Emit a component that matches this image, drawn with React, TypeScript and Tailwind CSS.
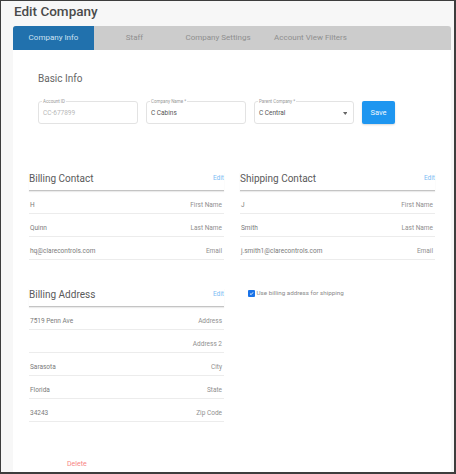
import React from "react";

const tabs = [
    { label: "Company Info", w: "w-[81px]", active: true },
    { label: "Staff", w: "w-[81px]" },
    { label: "Company Settings", w: "w-[86px]" },
    { label: "Account View Filters", w: "w-[99px]" },
];

export default function App() {
    return (
        <div className="w-[456px] h-[474px] flex flex-col bg-[#f7f7f7] border-t border-l border-r-2 border-b-2 border-[#3d3d3d] pl-[12px] pr-[3px] font-['Roboto',sans-serif] overflow-hidden">
            <h1 className="ml-[1px] text-[13.5px] leading-[20px] font-medium text-[#4a4a4a]">Edit Company</h1>

            {/* Tabs */}
            <div className="mt-[5px] h-[24px] flex bg-[#cccccc] rounded-t-[3px] overflow-hidden">
                {tabs.map((t) => (
                    <div
                        key={t.label}
                        className={`${t.w} flex items-center justify-center text-[8px] ${t.active ? "bg-[#2171ad] text-[#cfe2f2]" : "text-[#8f8f8f]"}`}
                    >
                        {t.label}
                    </div>
                ))}
            </div>

            {/* Card */}
            <div className="flex-1 bg-white px-4 pt-[22px]">
                <div className="ml-[9px]">
                    <h2 className="text-[10px] leading-[14px] text-[#666]">Basic Info</h2>
                    <div className="mt-[15px] flex gap-[8px]">
                        <Field label="Account ID" value="CC-677899" muted />
                        <Field label="Company Name *" value="C Cabins" />
                        <Field label="Parent Company *" value="C Central" select />
                        <button className="w-[33px] h-[23px] rounded-[2px] bg-[#1e96f0] text-[#eef7fe] text-[7.5px] shadow-[0_1px_2px_rgba(0,0,0,0.15)]">
                            Save
                        </button>
                    </div>
                </div>

                <div className="mt-[48px] grid grid-cols-2 gap-x-4 gap-y-[28px]">
                    <Section title="Billing Contact" rows={[["H", "First Name"], ["Quinn", "Last Name"], ["hq@clarecontrols.com", "Email"]]} />
                    <Section title="Shipping Contact" rows={[["J", "First Name"], ["Smith", "Last Name"], ["j.smith1@clarecontrols.com", "Email"]]} />
                    <Section
                        title="Billing Address"
                        rows={[["7519 Penn Ave", "Address"], ["", "Address 2"], ["Sarasota", "City"], ["Florida", "State"], ["34243", "Zip Code"]]}
                    />
                    <div>
                        <label className="mt-[2px] ml-[8px] h-[7px] flex items-center gap-[2px] text-[6.25px] text-[#8a8a8a]">
                            <span className="w-[6.5px] h-[6.5px] rounded-[1px] bg-[#1a73e8] flex items-center justify-center">
                                <svg viewBox="0 0 10 10" className="w-[5px] h-[5px]">
                                    <path d="M2 5.2 L4.2 7.3 L8 2.8" stroke="white" strokeWidth="1.8" fill="none" />
                                </svg>
                            </span>
                            Use billing address for shipping
                        </label>
                    </div>
                </div>

                <div className="mt-[38px] ml-[38px] text-[7px] leading-[9px] text-[#f78585]">Delete</div>
            </div>
        </div>
    );
}

function Field({ label, value, muted, select }: { label: string, value: string, muted?: boolean, select?: boolean }) {
    return (
        <div className="relative w-[100px] h-[23px] rounded-[3px] border border-[#e3e3e3] flex items-center pl-[4px] pr-[6px] pt-[3px]">
            <span className="absolute left-[3px] -top-[3px] px-[1px] bg-white text-[4.5px] leading-[5px] text-[#999]">{label}</span>
            <span className={`flex-1 text-[6.5px] ${muted ? "text-[#b8b8b8]" : "text-[#555]"}`}>{value}</span>
            {select && (
                <svg viewBox="0 0 6 4" className="w-[4.5px] h-[3px] mb-[2px]">
                    <path d="M0 0 L6 0 L3 4 Z" fill="#666" />
                </svg>
            )}
        </div>
    );
}

function Section({ title, rows }: { title: string, rows: string[][] }) {
    return (
        <div>
            <div className="flex items-center justify-between pb-[4px] border-b border-[#c4c4c4] shadow-[0_1px_1px_rgba(0,0,0,0.08)]">
                <h3 className="text-[10px] leading-[14px] text-[#5a5a5a]">{title}</h3>
                <a className="text-[6.5px] text-[#7dbcf3]">Edit</a>
            </div>
            {rows.map(([value, label], i) => (
                <div key={i} className="h-[23px] flex items-end justify-between pb-[3px] pr-[2px] border-b border-[#ececec] text-[6.5px] leading-[9px]">
                    <span className="ml-[1px] text-[#7a7a7a]">{value}</span>
                    <span className="text-[#8f8f8f]">{label}</span>
                </div>
            ))}
        </div>
    );
}
